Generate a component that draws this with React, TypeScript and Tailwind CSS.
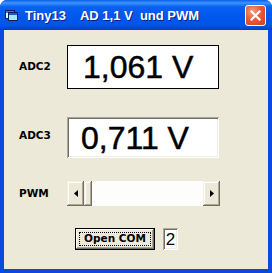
import React from 'react'

const raised =
  'shadow-[inset_-1px_-1px_0_#716F64,inset_1px_1px_0_#F1EFE2,inset_-2px_-2px_0_#ACA899,inset_2px_2px_0_#FFFFFF]'

function ArrowButton({ dir }: { dir: 'left' | 'right' }) {
  return (
    <div className={`flex h-full w-[17px] shrink-0 items-center justify-center bg-[#ECE9D8] ${raised}`}>
      <svg width="4" height="7" viewBox="0 0 4 7">
        {dir === 'left' ? (
          <path d="M4 0 L0 3.5 L4 7 Z" fill="#000" />
        ) : (
          <path d="M0 0 L4 3.5 L0 7 Z" fill="#000" />
        )}
      </svg>
    </div>
  )
}

export default function App() {
  return (
    <div
      className="flex h-[273px] w-[272px] flex-col overflow-hidden rounded-t-[7px] bg-[#0A48E0]"
      style={{ fontFamily: '"Liberation Sans", Arial, sans-serif' }}
    >
      {/* title bar */}
      <div className="flex h-[30px] shrink-0 items-center bg-[linear-gradient(to_bottom,#0A5FE8_0%,#3D95FF_10%,#0A62F0_22%,#0058EE_50%,#0055E8_85%,#0049D2_94%,#003DB8_100%)] pl-[5px] pr-[6px]">
        <svg width="13" height="11" viewBox="0 0 13 11" className="mr-[7px] mt-[1px]">
          <rect x="0.5" y="0.5" width="9" height="8" fill="#F4FAFF" stroke="#10205A" />
          <rect x="1" y="1" width="8" height="2" fill="#3A7BD5" />
          <rect x="3.5" y="2.5" width="9" height="8" fill="#A8E4F4" stroke="#10205A" />
          <rect x="4" y="3" width="8" height="2" fill="#1E5BC8" />
        </svg>
        <span className="whitespace-pre text-[13px] font-bold leading-none text-white [text-shadow:1px_1px_0_#0A1E8C]">
          {'Tiny13    AD 1,1 V  und PWM'}
        </span>
        <div className="ml-auto mt-[1px] flex h-[21px] w-[21px] items-center justify-center rounded-[3px] border border-white bg-[radial-gradient(circle_at_35%_30%,#F0A080_0%,#E2603A_45%,#C8401C_100%)]">
          <svg width="11" height="11" viewBox="0 0 11 11">
            <path d="M1.5 1.5 L9.5 9.5 M9.5 1.5 L1.5 9.5" stroke="#fff" strokeWidth="2.2" strokeLinecap="square" />
          </svg>
        </div>
      </div>

      {/* client area */}
      <div className="mx-[4px] mb-[4px] flex flex-1 flex-col bg-[#ECE9D8] pl-[15px]">
        <div className="mt-[15px] flex h-[44px] items-center">
          <span className="w-[48px] text-[10.5px] font-bold text-black [font-family:'DejaVu_Sans',sans-serif]">ADC2</span>
          <div className="flex h-full w-[152px] items-center border border-black bg-white pl-[15px] text-[32px] leading-none text-black [-webkit-text-stroke:0.5px_black]">
            1,061 V
          </div>
        </div>

        <div className="mt-[28px] flex h-[41px] items-center">
          <span className="mt-[-4px] w-[48px] text-[10.5px] font-bold text-black [font-family:'DejaVu_Sans',sans-serif]">ADC3</span>
          <div className="flex h-full w-[152px] items-center bg-white pl-[14px] text-[32px] leading-none text-black shadow-[inset_1px_1px_0_#ACA899,inset_-1px_-1px_0_#FFFFFF,inset_2px_2px_0_#716F64,inset_-2px_-2px_0_#F1EFE2] [-webkit-text-stroke:0.5px_black]">
            0,711 V
          </div>
        </div>

        <div className="mt-[23px] flex h-[25px] items-center">
          <span className="w-[48px] text-[10.5px] font-bold text-black [font-family:'DejaVu_Sans',sans-serif]">PWM</span>
          <div className="flex h-full w-[153px]">
            <ArrowButton dir="left" />
            <div className={`h-full w-[8px] shrink-0 bg-[#ECE9D8] ${raised}`} />
            <div className="h-full flex-1 bg-[#FDFDFB]" />
            <ArrowButton dir="right" />
          </div>
        </div>

        <div className="mt-[22px] flex h-[22px] items-center pl-[56px]">
          <button className="relative flex h-full w-[80px] items-center justify-center border border-black bg-[#ECE9D8] text-[10.5px] font-bold text-black shadow-[inset_-1px_-1px_0_#716F64,inset_1px_1px_0_#FFFFFF,inset_-2px_-2px_0_#ACA899] [font-family:'DejaVu_Sans',sans-serif]">
            <span className="absolute inset-[3px] border border-dotted border-black" />
            Open COM
          </button>
          <div className="ml-[8px] flex h-full w-[15px] items-center justify-center bg-white text-[17px] leading-none text-black shadow-[inset_1px_1px_0_#ACA899,inset_-1px_-1px_0_#FFFFFF,inset_2px_2px_0_#716F64,inset_-2px_-2px_0_#F1EFE2]">
            2
          </div>
        </div>
      </div>
    </div>
  )
}
